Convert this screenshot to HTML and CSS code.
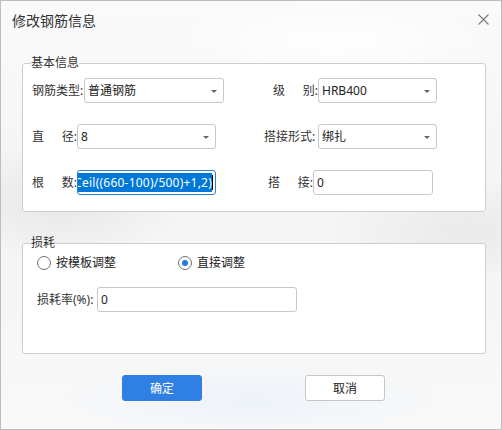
FILE: index.html
```html
<!DOCTYPE html>
<html lang="zh-CN">
<head>
<meta charset="utf-8">
<title>修改钢筋信息</title>
<link rel="stylesheet" href="styles.css">
</head>
<body>
<div class="window">
  <div class="titlebar">
    <span class="title">修改钢筋信息</span>
    <svg class="close" width="11" height="11" viewBox="0 0 11 11"><path d="M0.5 0.5 L10.5 10.5 M10.5 0.5 L0.5 10.5" stroke="#7a7a7a" stroke-width="1.1" fill="none"/></svg>
  </div>

  <fieldset class="group group-basic">
    <legend class="legend">基本信息</legend>
    <div class="row">
      <div class="cell-left">
        <span class="lbl lbl-4">钢筋类型:</span>
        <div class="select w140"><span class="val">普通钢筋</span><span class="arrow"></span></div>
      </div>
      <div class="cell-right pad-9">
        <span class="lbl lbl-2"><span>级</span><span>别:</span></span>
        <div class="select w119"><span class="val">HRB400</span><span class="arrow"></span></div>
      </div>
    </div>
    <div class="row">
      <div class="cell-left">
        <span class="lbl lbl-2"><span>直</span><span>径:</span></span>
        <div class="select w139"><span class="val">8</span><span class="arrow"></span></div>
      </div>
      <div class="cell-right">
        <span class="lbl lbl-4b">搭接形式:</span>
        <div class="select w119"><span class="val">绑扎</span><span class="arrow"></span></div>
      </div>
    </div>
    <div class="row row-last">
      <div class="cell-left">
        <span class="lbl lbl-2"><span>根</span><span>数:</span></span>
        <div class="input input-focus w139"><div class="sel-clip"><span class="sel">=Ceil((660-100)/500)+1,2)</span></div><span class="caret"></span></div>
      </div>
      <div class="cell-right pad-4">
        <span class="lbl lbl-2"><span>搭</span><span>接:</span></span>
        <div class="input w120"><span class="val">0</span></div>
      </div>
    </div>
  </fieldset>

  <fieldset class="group group-loss">
    <legend class="legend">损耗</legend>
    <div class="radio-row">
      <label class="radio-item first"><span class="radio"></span><span class="radio-text">按模板调整</span></label>
      <label class="radio-item"><span class="radio checked"></span><span class="radio-text">直接调整</span></label>
    </div>
    <div class="rate-row">
      <span class="lbl lbl-rate">损耗率(%):</span>
      <div class="input w199"><span class="val">0</span></div>
    </div>
  </fieldset>

  <div class="buttons">
    <div class="btn btn-primary">确定</div>
    <div class="btn btn-default">取消</div>
  </div>
</div>
</body>
</html>
```

FILE: styles.css
```css
html, body {
  margin: 0;
  padding: 0;
}
body {
  width: 502px;
  height: 430px;
  overflow: hidden;
  font-family: "Noto Sans", "Noto Sans CJK SC", sans-serif;
  font-size: 12px;
  color: #333;
}
.window {
  box-sizing: border-box;
  width: 502px;
  height: 430px;
  border: 1px solid #bdbdbd;
  padding: 0 15px 0 21px;
  display: flex;
  flex-direction: column;
  background:
    radial-gradient(ellipse 120px 60px at 60px 200px, rgba(225,225,225,0.7), rgba(225,225,225,0)),
    radial-gradient(ellipse 140px 50px at 470px 230px, rgba(228,228,228,0.7), rgba(228,228,228,0)),
    radial-gradient(ellipse 200px 40px at 250px 400px, rgba(236,242,250,0.9), rgba(236,242,250,0)),
    radial-gradient(ellipse 160px 40px at 330px 40px, rgba(255,255,255,1), rgba(255,255,255,0)),
    linear-gradient(180deg, #fafafa 0%, #f4f4f4 45%, #f6f6f6 75%, #f9f9f9 100%);
}
.titlebar {
  height: 40px;
  margin: 0 -15px 0 -21px;
  padding: 0 12px 0 11px;
  display: flex;
  align-items: center;
  justify-content: space-between;
}
.title {
  font-size: 14px;
  line-height: 20px;
  color: #333;
}
.close {
  display: block;
  margin-top: -3px;
}

/* group boxes */
.group {
  margin: 0;
  border: 1px solid #cdcdcd;
  border-radius: 3px;
  background: #fff;
  min-width: 0;
}
.legend {
  padding: 0;
  font-size: 12px;
  line-height: 14px;
  color: #333;
}
.group-basic {
  margin-top: 15px;
  padding: 8px 9px 16px 9px;
}
.group-basic .legend {
  margin-left: -1px;
}
.group-loss {
  margin-top: 24px;
  padding: 5px 9px 41px 14px;
}
.group-loss .legend {
  margin-left: -6px;
}

/* rows */
.row {
  display: flex;
  align-items: center;
  height: 25px;
  margin-bottom: 21px;
}
.row-last {
  margin-top: 1px;
  margin-bottom: 0;
}
.cell-left {
  width: 232px;
  display: flex;
  align-items: center;
}
.cell-right {
  display: flex;
  align-items: center;
}
.pad-9 { padding-left: 9px; }
.pad-4 { padding-left: 4px; }

.lbl {
  display: flex;
  justify-content: space-between;
  white-space: nowrap;
  line-height: 16px;
}
.lbl-4 { width: 52px; }
.lbl-4b { width: 54px; }
.lbl-2 { width: 45px; }
.lbl-rate { width: 60px; }

/* fields */
.select, .input {
  box-sizing: border-box;
  height: 25px;
  border: 1px solid #c8c8c8;
  border-radius: 3px;
  background: #fff;
  display: flex;
  align-items: center;
  padding-left: 3px;
  color: #222;
}
.select {
  justify-content: space-between;
  padding-right: 6px;
}
.val {
  line-height: 16px;
  white-space: nowrap;
}
.arrow {
  width: 0;
  height: 0;
  border-left: 3px solid transparent;
  border-right: 3px solid transparent;
  border-top: 3px solid #666;
  margin-top: 1px;
}
.w140 { width: 140px; }
.w139 { width: 139px; }
.w119 { width: 119px; }
.w120 { width: 120px; }
.w199 { width: 200px; }

.input-focus {
  border-color: #2d7fdc;
  padding-left: 0;
  padding-right: 2px;
}
.sel-clip {
  flex: 1;
  min-width: 0;
  height: 19px;
  overflow: hidden;
  display: flex;
  justify-content: flex-end;
}
.sel {
  background: #0078d7;
  color: #fff;
  line-height: 19px;
  height: 19px;
  white-space: nowrap;
  flex-shrink: 0;
  letter-spacing: 0.22px;
}
.caret {
  width: 1px;
  height: 15px;
  background: #000;
  flex-shrink: 0;
}

/* radios */
.radio-row {
  display: flex;
  align-items: center;
  height: 16px;
}
.radio-item {
  display: flex;
  align-items: center;
}
.radio-item.first {
  width: 141px;
}
.radio {
  box-sizing: border-box;
  width: 14px;
  height: 14px;
  border: 1px solid #6f6f6f;
  border-radius: 50%;
  background: #fff;
  margin-right: 5px;
  display: flex;
  align-items: center;
  justify-content: center;
}
.radio.checked::after {
  content: "";
  width: 6px;
  height: 6px;
  border-radius: 50%;
  background: #1f7be3;
}
.radio-text {
  font-size: 12px;
  line-height: 16px;
  color: #222;
}
.rate-row {
  display: flex;
  align-items: center;
  margin-top: 16px;
}

/* buttons */
.buttons {
  display: flex;
  gap: 103px;
  margin-top: 21px;
  padding-left: 100px;
}
.btn {
  box-sizing: border-box;
  width: 80px;
  height: 26px;
  border-radius: 3px;
  display: flex;
  align-items: center;
  justify-content: center;
  font-size: 12px;
}
.btn-primary {
  background: #2f80e2;
  color: #fff;
  border: 1px solid #2f80e2;
}
.btn-default {
  background: #fff;
  color: #222;
  border: 1px solid #c6c6c6;
}
```
